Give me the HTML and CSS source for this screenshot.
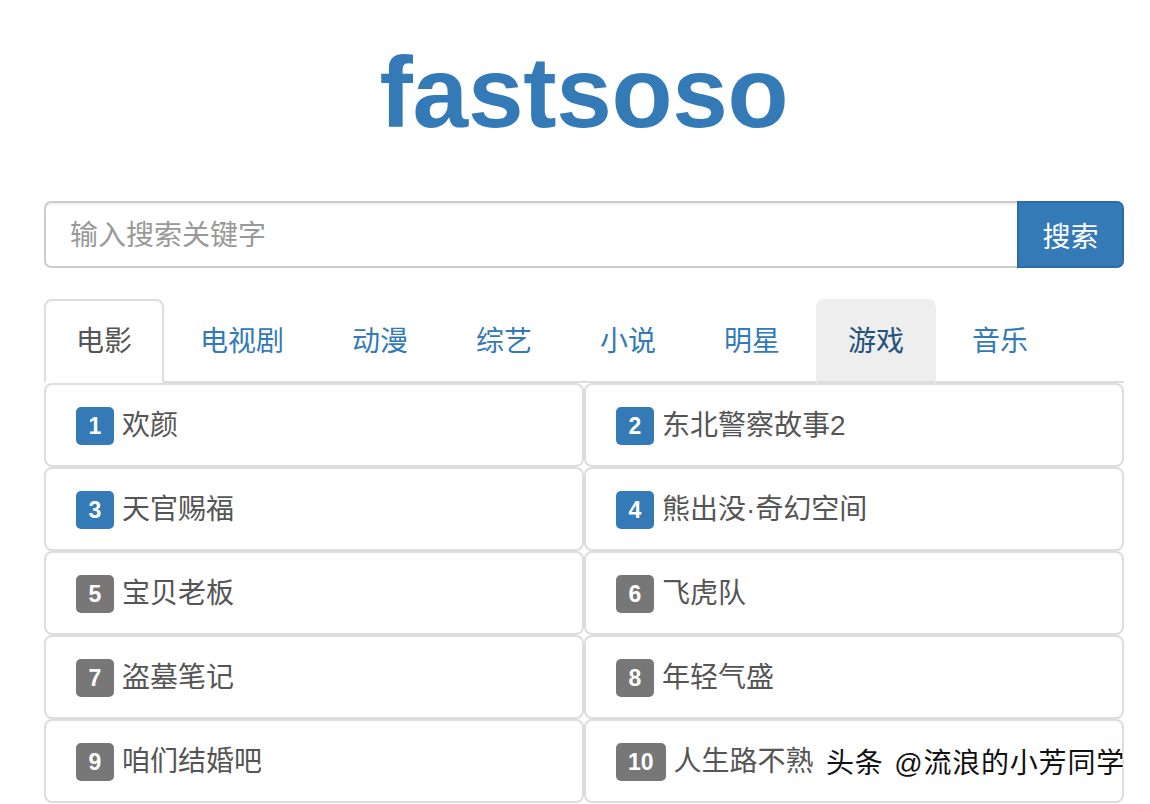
FILE: index.html
```html
<!DOCTYPE html>
<html lang="zh-CN">
<head>
<meta charset="utf-8">
<title>fastsoso</title>
<link rel="stylesheet" href="styles.css">
</head>
<body>
<div class="page">
  <h1 class="logo">fastsoso</h1>
  <form class="search">
    <input class="search-input" type="text" placeholder="输入搜索关键字">
    <button class="search-btn" type="button">搜索</button>
  </form>
  <ul class="tabs">
    <li class="tab active">电影</li>
    <li class="tab">电视剧</li>
    <li class="tab">动漫</li>
    <li class="tab">综艺</li>
    <li class="tab">小说</li>
    <li class="tab">明星</li>
    <li class="tab hover">游戏</li>
    <li class="tab">音乐</li>
  </ul>
  <div class="list">
    <div class="item"><span class="badge hot">1</span>欢颜</div>
    <div class="item"><span class="badge hot">2</span>东北警察故事2</div>
    <div class="item"><span class="badge hot">3</span>天官赐福</div>
    <div class="item"><span class="badge hot">4</span>熊出没·奇幻空间</div>
    <div class="item"><span class="badge">5</span>宝贝老板</div>
    <div class="item"><span class="badge">6</span>飞虎队</div>
    <div class="item"><span class="badge">7</span>盗墓笔记</div>
    <div class="item"><span class="badge">8</span>年轻气盛</div>
    <div class="item"><span class="badge">9</span>咱们结婚吧</div>
    <div class="item"><span class="badge">10</span>人生路不熟</div>
  </div>
  <div class="watermark">头条 @流浪的小芳同学</div>
</div>
</body>
</html>
```
FILE: styles.css
```css
html, body {
  margin: 0;
  padding: 0;
  background: #fff;
}
body {
  font-family: "Liberation Sans", "Noto Sans CJK SC", Arial, sans-serif;
  font-size: 28px;
  color: #555;
  overflow: hidden;
}
.page {
  position: relative;
  width: 1080px;
  margin-left: 44px;
  height: 804px;
}
.logo {
  margin: 0;
  padding-top: 42px;
  font-family: "Liberation Sans", Arial, sans-serif;
  font-size: 100px;
  line-height: 100px;
  font-weight: bold;
  color: #337ab7;
  text-align: center;
  letter-spacing: -0.3px;
}
.search {
  display: flex;
  margin: 59px 0 0 0;
  height: 67px;
}
.search-input {
  flex: 1;
  box-sizing: border-box;
  height: 67px;
  margin: 0;
  padding: 2px 24px 0 24px;
  border: 2px solid #ccc;
  border-right: none;
  border-radius: 7px 0 0 7px;
  font-family: "Liberation Sans", "Noto Sans CJK SC", sans-serif;
  font-size: 28px;
  color: #555;
  outline: none;
  box-shadow: inset 0 2px 2px rgba(0,0,0,0.06);
}
.search-input::placeholder {
  color: #999;
}
.search-btn {
  box-sizing: border-box;
  width: 107px;
  height: 67px;
  margin: 0;
  border: 2px solid #2e6da4;
  border-radius: 0 7px 7px 0;
  background: #337ab7;
  color: #fff;
  font-family: "Liberation Sans", "Noto Sans CJK SC", sans-serif;
  font-size: 28px;
  padding: 0;
}
.tabs {
  display: flex;
  list-style: none;
  margin: 31px 0 0 0;
  padding: 0;
  border-bottom: 2px solid #ddd;
}
.tab {
  box-sizing: border-box;
  margin: 0 4px -2px 0;
  padding: 21px 30px 19px 30px;
  line-height: 40px;
  border: 2px solid transparent;
  border-radius: 8px 8px 0 0;
  color: #337ab7;
}
.tab.active {
  color: #555;
  background: #fff;
  border-color: #ddd #ddd transparent #ddd;
}
.tab.hover {
  background: #eee;
  border-color: #eee #eee #ddd #eee;
  color: #23527c;
}
.list {
  display: grid;
  grid-template-columns: 1fr 1fr;
}
.item {
  display: flex;
  align-items: center;
  box-sizing: border-box;
  height: 84px;
  padding: 21px 30px 19px 30px;
  border: 2px solid #ddd;
  border-radius: 8px;
  background: #fff;
  color: #555;
  line-height: 40px;
}
.badge {
  display: inline-flex;
  align-items: center;
  justify-content: center;
  box-sizing: border-box;
  min-width: 38px;
  height: 38px;
  padding: 0 12px;
  margin-right: 8px;
  border-radius: 5px;
  background: #777;
  color: #fff;
  font-family: "Liberation Sans", Arial, sans-serif;
  font-weight: bold;
  font-size: 23px;
  line-height: 1;
}
.badge.hot {
  background: #337ab7;
}
.watermark {
  position: absolute;
  left: 782px;
  top: 744px;
  font-size: 28px;
  line-height: 40px;
  color: #111;
  white-space: nowrap;
  letter-spacing: 0.8px;
  word-spacing: 2px;
  text-shadow: 1px 1px 0 #fff, -1px -1px 0 #fff, 1px -1px 0 #fff, -1px 1px 0 #fff;
}
```
